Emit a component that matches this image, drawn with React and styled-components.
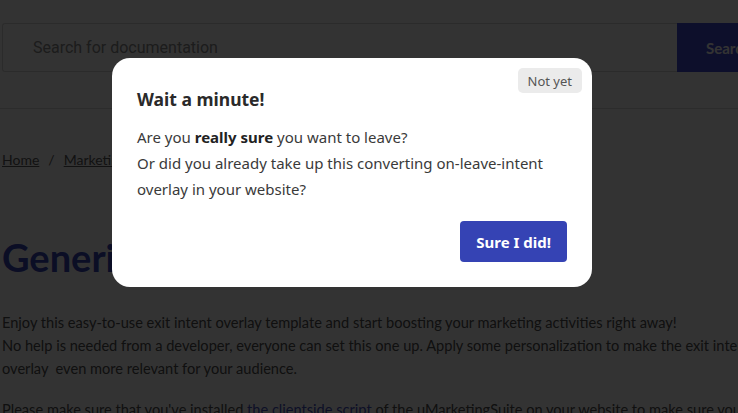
import React from "react";
import styled, { createGlobalStyle } from "styled-components";

const GlobalStyle = createGlobalStyle`
  html, body {
    margin: 0;
    padding: 0;
    background: #ffffff;
    overflow: hidden;
  }
`;

// background page
const Page = styled.div`
  width: 738px;
  height: 413px;
  font-family: "Lato", "Liberation Sans", sans-serif;
  color: #505050;
  overflow: hidden;
`;

const SearchBar = styled.div`
  display: flex;
  margin: 23px 0 0 2px;
  height: 49px;
`;

const SearchInput = styled.div`
  flex: 1;
  display: flex;
  align-items: center;
  padding-left: 30px;
  border: 1px solid #d7d7d7;
  border-right: none;
  border-radius: 3px 0 0 3px;
  font-family: "Roboto", "Liberation Sans", sans-serif;
  font-size: 16px;
  color: #8c8c8c;
`;

const SearchButton = styled.div`
  width: 61px;
  box-sizing: border-box;
  flex-shrink: 0;
  background: #414bd7;
  color: #ffffff;
  font-weight: 700;
  font-size: 15px;
  display: flex;
  align-items: center;
  padding-left: 29px;
  white-space: nowrap;
  overflow: hidden;
`;

const Divider = styled.div`
  height: 1px;
  background: #dddddd;
  margin-top: 36px;
`;

const Breadcrumb = styled.div`
  display: flex;
  gap: 9px;
  padding: 42px 0 0 2px;
  font-size: 14px;
  color: #5a5a5a;
  a {
    color: inherit;
    text-decoration: underline;
  }
`;

const Heading = styled.h1`
  margin: 70px 0 0 2px;
  font-size: 38px;
  font-weight: 700;
  color: #3a46b8;
  line-height: 1;
`;

const Body = styled.p`
  margin: ${(p) => p.$top}px 0 0 2px;
  font-size: 14.6px;
  line-height: 23px;
  white-space: nowrap;
  a {
    color: #4450c0;
    text-decoration: none;
  }
`;

// overlay + modal
const Overlay = styled.div`
  position: fixed;
  inset: 0;
  background: rgba(0, 0, 0, 0.8);
  display: flex;
  align-items: flex-start;
  padding: 58px 0 0 112px;
`;

const Modal = styled.div`
  position: relative;
  width: 480px;
  box-sizing: border-box;
  background: #ffffff;
  border-radius: 18px;
  padding: 29px 25px 25px 25px;
  font-family: "Noto Sans", "Open Sans", sans-serif;
  color: #333333;
`;

const CloseButton = styled.button`
  position: absolute;
  top: 10px;
  right: 10px;
  height: 25px;
  padding: 0 10px;
  border: none;
  border-radius: 5px;
  background: #ebebeb;
  color: #555555;
  font-family: inherit;
  font-size: 13px;
`;

const Title = styled.h2`
  margin: 0;
  font-size: 17.5px;
  font-weight: 700;
  line-height: 24px;
  color: #2a2a2a;
`;

const Message = styled.p`
  margin: 13px 0 0;
  font-size: 15px;
  line-height: 26px;
  color: #3a3a3a;
  b {
    font-weight: 700;
    color: #222222;
  }
`;

const Actions = styled.div`
  display: flex;
  justify-content: flex-end;
  margin-top: 19px;
`;

const ConfirmButton = styled.button`
  height: 41px;
  padding: 0 16px;
  border: none;
  border-radius: 4px;
  background: #3543b4;
  color: #ffffff;
  font-family: inherit;
  font-size: 15px;
  font-weight: 700;
`;

export default function App() {
  return (
    <>
      <GlobalStyle />
      <Page>
        <SearchBar>
          <SearchInput>Search for documentation</SearchInput>
          <SearchButton>Search</SearchButton>
        </SearchBar>
        <Divider />
        <Breadcrumb>
          <a>Home</a>
          <span>/</span>
          <a>Marketing</a>
        </Breadcrumb>
        <Heading>Generic exit intent overlay</Heading>
        <Body $top={35}>
          Enjoy this easy-to-use exit intent overlay template and start boosting your marketing activities right away!
          <br />
          No help is needed from a developer, everyone can set this one up. Apply some personalization to make the exit intent
          <br />
          overlay&nbsp; even more relevant for your audience.
        </Body>
        <Body $top={18}>
          Please make sure that you've installed <a>the clientside script</a> of the uMarketingSuite on your website to make sure your
        </Body>
      </Page>
      <Overlay>
        <Modal>
          <CloseButton>Not yet</CloseButton>
          <Title>Wait a minute!</Title>
          <Message>
            Are you <b>really sure</b> you want to leave?
            <br />
            Or did you already take up this converting on-leave-intent overlay in your website?
          </Message>
          <Actions>
            <ConfirmButton>Sure I did!</ConfirmButton>
          </Actions>
        </Modal>
      </Overlay>
    </>
  );
}
